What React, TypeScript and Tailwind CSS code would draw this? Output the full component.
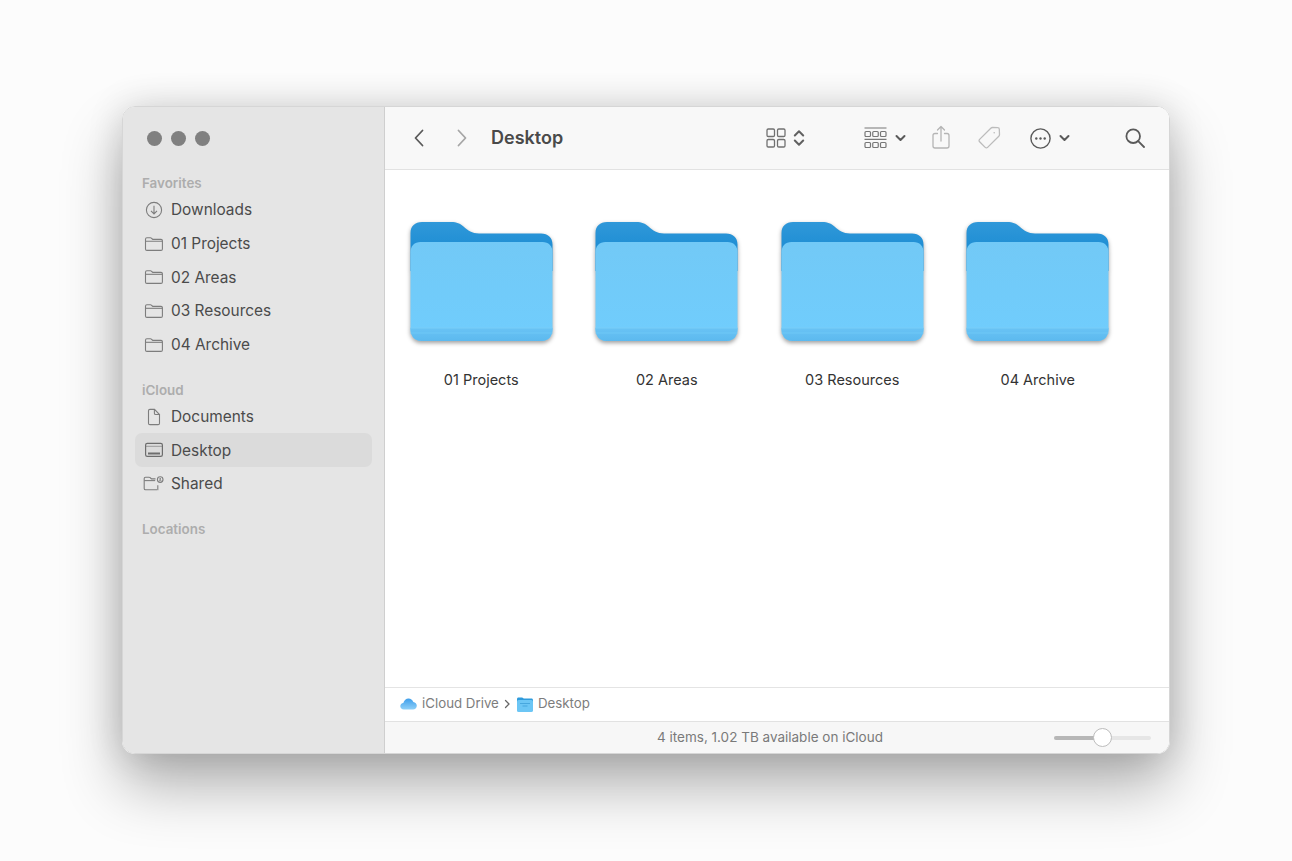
import React from "react";

const folderItems = ["01 Projects", "02 Areas", "03 Resources", "04 Archive"];

function SmallFolder() {
  return (
    <svg width="20" height="20" viewBox="0 0 20 20" fill="none" stroke="#7d7d7d" strokeWidth="1.1">
      <path d="M1.5 15V5.2c0-.8.5-1.4 1.4-1.4h3.6c.5 0 .8.2 1.1.5l.7.7c.3.3.6.4 1.1.4h7.6c.8 0 1.4.6 1.4 1.4V15c0 .9-.6 1.4-1.4 1.4H2.9c-.9 0-1.4-.5-1.4-1.4z" />
      <path d="M1.5 7.3h17" />
    </svg>
  );
}

function DownloadIcon() {
  return (
    <svg width="20" height="20" viewBox="0 0 20 20" fill="none" stroke="#7d7d7d" strokeWidth="1.1">
      <circle cx="10" cy="10" r="7.6" />
      <path d="M10 5.8v8M7 10.9l3 3 3-3" />
    </svg>
  );
}

function DocIcon() {
  return (
    <svg width="20" height="20" viewBox="0 0 20 20" fill="none" stroke="#7d7d7d" strokeWidth="1.1">
      <path d="M4.5 3.8c0-.8.5-1.4 1.4-1.4h4.6l5 5.1v8.7c0 .9-.5 1.4-1.4 1.4H5.9c-.9 0-1.4-.5-1.4-1.4z" />
      <path d="M10.4 2.5v3.7c0 .8.5 1.3 1.3 1.3h3.7" />
    </svg>
  );
}

function DesktopIcon() {
  return (
    <svg width="20" height="20" viewBox="0 0 20 20" fill="none" stroke="#6d6d6d" strokeWidth="1.2">
      <rect x="1.6" y="3.4" width="16.8" height="13" rx="1.7" />
      <path d="M1.6 6.3h16.8" strokeWidth="0.6" />
      <path d="M4 13.5h12" strokeWidth="2" />
    </svg>
  );
}

function SharedIcon() {
  return (
    <svg width="22" height="20" viewBox="0 0 22 20" fill="none" stroke="#7d7d7d" strokeWidth="1.1">
      <path d="M14 15.8H2.5c-.8 0-1.3-.5-1.3-1.3V4.6c0-.8.5-1.3 1.3-1.3h3.6c.5 0 .8.1 1.1.4l.8.8c.3.3.6.4 1.1.4h3.4" />
      <path d="M1.2 6.6h11" />
      <path d="M14.4 15.8h.4v-4.6" />
      <circle cx="17.2" cy="5.6" r="2.8" />
      <circle cx="17.2" cy="4.9" r="0.9" fill="#7d7d7d" stroke="none" />
      <path d="M15.6 7.4c.5-1.1 2.7-1.1 3.2 0" strokeWidth="0.9" />
    </svg>
  );
}

function SideRow({ icon, label, active }: { icon: React.ReactNode; label: string; active?: boolean }) {
  return (
    <div className={`flex h-[33.6px] items-center rounded-[7px] ${active ? "bg-[#dbdbdb]" : ""}`}>
      <div className="flex w-[36px] shrink-0 justify-center pl-[2px]">{icon}</div>
      <span className="text-[15.4px] leading-none text-[#4b4b4b]">{label}</span>
    </div>
  );
}

function SideHeading({ children, className }: { children: React.ReactNode; className: string }) {
  return <div className={`pl-[7px] text-[13.4px] font-semibold leading-[16px] text-[#adadad] ${className}`}>{children}</div>;
}

function Folder() {
  return (
    <svg width="143" height="124" viewBox="0 0 143 124" className="block">
      <defs>
        <linearGradient id="back" x1="0" y1="0" x2="0" y2="1">
          <stop offset="0" stopColor="#3098d9" />
          <stop offset="1" stopColor="#0f85cf" />
        </linearGradient>
        <linearGradient id="front" x1="0" y1="0" x2="0" y2="1">
          <stop offset="0" stopColor="#72c9f6" />
          <stop offset="1" stopColor="#70cdfd" />
        </linearGradient>
        <linearGradient id="strip" x1="0" y1="0" x2="0" y2="1">
          <stop offset="0" stopColor="#69c3f5" />
          <stop offset="1" stopColor="#5cb9ee" />
        </linearGradient>
      </defs>
      <path
        d="M0.5 50V12C0.5 5 5 1 12 1h29c6 0 9 1.500 12.500 4.500C58 9.500 62 12.500 69 12.500H131c7 0 11.500 4 11.500 11V50z"
        fill="url(#back)"
      />
      <path
        d="M0.5 31c0-6 4-10 10-10h122c6 0 10 4 10 10v77c0 7-4 12-11 12H11.500c-7 0-11-5-11-12z"
        fill="url(#front)"
      />
      <path d="M0.5 107h142v1c0 7-4 12-11 12H11.500c-7 0-11-5-11-12z" fill="url(#strip)" />
      <path d="M0.500 107h142" stroke="#78cdf8" strokeWidth="1" />
      <path d="M0.500 112h142" stroke="#6fc8f6" strokeWidth="1" />
    </svg>
  );
}

function IconGrid() {
  return (
    <svg width="20" height="20" viewBox="0 0 20 20" fill="none" stroke="#707070" strokeWidth="1.3">
      <rect x="1" y="1" width="7.500" height="7.500" rx="1.300" />
      <rect x="11.500" y="1" width="7.500" height="7.500" rx="1.300" />
      <rect x="1" y="11.500" width="7.500" height="7.500" rx="1.300" />
      <rect x="11.500" y="11.500" width="7.500" height="7.500" rx="1.300" />
    </svg>
  );
}

function UpDown() {
  return (
    <svg width="12" height="20" viewBox="0 0 12 20" fill="none" stroke="#626262" strokeWidth="2" strokeLinecap="round" strokeLinejoin="round">
      <path d="M1.800 7.500 6 3.200l4.200 4.300M1.800 12.500 6 16.800l4.200-4.300" />
    </svg>
  );
}

function Chevron() {
  return (
    <svg width="11" height="8" viewBox="0 0 11 8" fill="none" stroke="#5a5a5a" strokeWidth="2" strokeLinecap="round" strokeLinejoin="round">
      <path d="M1.500 2 5.500 6l4-4" />
    </svg>
  );
}

function GroupIcon() {
  return (
    <svg width="23" height="22" viewBox="0 0 23 22" fill="none" stroke="#777" strokeWidth="1.200">
      <path d="M0.500 1h22M0.500 12.400h22" />
      <rect x="1" y="4.500" width="5.500" height="5" rx="1" />
      <rect x="8.750" y="4.500" width="5.500" height="5" rx="1" />
      <rect x="16.500" y="4.500" width="5.500" height="5" rx="1" />
      <rect x="1" y="15.500" width="5.500" height="5" rx="1" />
      <rect x="8.750" y="15.500" width="5.500" height="5" rx="1" />
      <rect x="16.500" y="15.500" width="5.500" height="5" rx="1" />
    </svg>
  );
}

function ShareIcon() {
  return (
    <svg width="18" height="24" viewBox="0 0 18 24" fill="none" stroke="#b4b4b4" strokeWidth="1.300" strokeLinecap="round" strokeLinejoin="round">
      <path d="M5.500 8.500H3c-1.300 0-2 .7-2 2V21c0 1.300.7 2 2 2h12c1.300 0 2-.7 2-2V10.500c0-1.300-.7-2-2-2h-2.500" />
      <path d="M9 16V1.500M5.500 5 9 1.500 12.500 5" />
    </svg>
  );
}

function TagIcon() {
  return (
    <svg width="24" height="24" viewBox="0 0 24 24" fill="none" stroke="#bcbcbc" strokeWidth="1.300" strokeLinejoin="round">
      <path d="M13.800 2.200c.5-.5 1-.7 1.700-.7l5.300.2c.9 0 1.500.6 1.500 1.500l.2 5.300c0 .7-.2 1.200-.7 1.700L10.600 21.400c-.7.7-1.700.7-2.400 0l-5.600-5.600c-.7-.7-.7-1.700 0-2.400z" />
      <circle cx="17.200" cy="6.800" r="0.800" fill="#bcbcbc" stroke="none" />
    </svg>
  );
}

function MoreIcon() {
  return (
    <svg width="21" height="21" viewBox="0 0 21 21" fill="none" stroke="#5a5a5a" strokeWidth="1.400">
      <circle cx="10.500" cy="10.500" r="9.600" />
      <circle cx="6.300" cy="10.500" r="1.200" fill="#5a5a5a" stroke="none" />
      <circle cx="10.500" cy="10.500" r="1.200" fill="#5a5a5a" stroke="none" />
      <circle cx="14.700" cy="10.500" r="1.200" fill="#5a5a5a" stroke="none" />
    </svg>
  );
}

function SearchIcon() {
  return (
    <svg width="20" height="20" viewBox="0 0 20 20" fill="none" stroke="#5a5a5a" strokeWidth="1.800" strokeLinecap="round">
      <circle cx="8.200" cy="8.200" r="6.800" />
      <path d="M13.200 13.200 19 19" />
    </svg>
  );
}

function Back({ color }: { color: string }) {
  return (
    <svg width="12" height="18" viewBox="0 0 12 18" fill="none" stroke={color} strokeWidth="1.800" strokeLinecap="round" strokeLinejoin="round">
      <path d="M9.500 1.500 2.500 9l7 7.500" />
    </svg>
  );
}

function Forward({ color }: { color: string }) {
  return (
    <svg width="12" height="18" viewBox="0 0 12 18" fill="none" stroke={color} strokeWidth="1.800" strokeLinecap="round" strokeLinejoin="round">
      <path d="M2.500 1.500 9.500 9l-7 7.500" />
    </svg>
  );
}

function CloudIcon() {
  return (
    <svg width="17" height="12" viewBox="0 0 17 12">
      <defs>
        <linearGradient id="cloud" x1="0" y1="0" x2="0" y2="1">
          <stop offset="0" stopColor="#3f9feb" />
          <stop offset="1" stopColor="#8fd0f8" />
        </linearGradient>
      </defs>
      <path d="M3.800 11.500C1.800 11.500.3 10.100.3 8.300c0-1.700 1.300-3 3-3.200C4 2.500 6.100.6 8.500.6c2.200 0 4 1.300 4.800 3.400 2 .2 3.500 1.900 3.500 3.800 0 2.100-1.700 3.700-3.800 3.700z" fill="url(#cloud)" />
    </svg>
  );
}

function TinyFolder() {
  return (
    <svg width="16" height="15" viewBox="0 0 16 15">
      <path d="M0 2c0-1 .6-1.600 1.600-1.600h3.600l1.600 1.200h7.600c1 0 1.600.6 1.600 1.600v3H0z" fill="#2f9bdc" />
      <rect x="0" y="3" width="16" height="12" rx="1.600" fill="#6cc6f5" />
      <path d="M3 6.500h10M5.500 9h5" stroke="#3d9fd8" strokeWidth="0.800" />
    </svg>
  );
}

export default function App() {
  return (
    <div
      className="flex h-[861px] w-full justify-center overflow-hidden bg-[#fcfcfc] pt-[106px]"
      style={{ fontFamily: "Inter, 'Liberation Sans', sans-serif" }}
    >
      <div className="flex h-[648px] w-[1048px] overflow-hidden rounded-[13px] border border-[#d6d6d6] shadow-[0_32px_60px_rgba(0,0,0,0.3),0_0_36px_rgba(0,0,0,0.14)]">
        <aside className="flex w-[262px] shrink-0 flex-col border-r border-[#cfcfcf] bg-[#e5e5e5] pl-[12px] pr-[12px]">
          <div className="flex h-[62px] shrink-0 items-center gap-[9px] pl-[12px]">
            <span className="h-[15px] w-[15px] rounded-full bg-[#808080]" />
            <span className="h-[15px] w-[15px] rounded-full bg-[#808080]" />
            <span className="h-[15px] w-[15px] rounded-full bg-[#808080]" />
          </div>
          <SideHeading className="mt-[6px]">Favorites</SideHeading>
          <div className="mt-[2.4px]">
            <SideRow icon={<DownloadIcon />} label="Downloads" />
            {folderItems.map((name) => (
              <SideRow key={name} icon={<SmallFolder />} label={name} />
            ))}
          </div>
          <SideHeading className="mt-[21.1px]">iCloud</SideHeading>
          <div className="mt-[1.4px]">
            <SideRow icon={<DocIcon />} label="Documents" />
            <SideRow icon={<DesktopIcon />} label="Desktop" active />
            <SideRow icon={<SharedIcon />} label="Shared" />
          </div>
          <SideHeading className="mt-[20.6px]">Locations</SideHeading>
        </aside>

        <main className="flex min-w-0 flex-1 flex-col bg-white">
          <header className="flex h-[63px] shrink-0 items-center border-b border-[#e2e2e2] bg-[#f8f8f8] pl-[28px]">
            <Back color="#5a5a5a" />
            <span className="ml-[31px]"><Forward color="#a6a6a6" /></span>
            <h1 className="ml-[23px] w-[275px] text-[18px] font-semibold leading-none text-[#4a4a4a]">Desktop</h1>
            <IconGrid />
            <span className="ml-[7px]"><UpDown /></span>
            <span className="ml-[59px]"><GroupIcon /></span>
            <span className="ml-[8px]"><Chevron /></span>
            <span className="ml-[26px] -mt-[3px]"><ShareIcon /></span>
            <span className="ml-[27px]"><TagIcon /></span>
            <span className="ml-[29px]"><MoreIcon /></span>
            <span className="ml-[8px]"><Chevron /></span>
            <span className="ml-[55px]"><SearchIcon /></span>
          </header>

          <section className="flex flex-1 items-start pl-[3.500px] pt-[51px]">
            {folderItems.map((name) => (
              <div key={name} className="flex w-[185.500px] flex-col items-center">
                <div className="drop-shadow-[0_2px_2px_rgba(0,0,0,0.38)]"><Folder /></div>
                <span className="mt-[26px] text-[14.500px] leading-[18px] text-[#333333]">{name}</span>
              </div>
            ))}
          </section>

          <div className="flex h-[34px] shrink-0 items-center gap-[5px] border-t border-[#e4e4e4] pb-[1px] pl-[15px] text-[13.300px] text-[#7d7d7d]">
            <CloudIcon />
            <span>iCloud Drive</span>
            <svg width="7" height="10" viewBox="0 0 7 10" fill="none" stroke="#666" strokeWidth="1.300" strokeLinecap="round" strokeLinejoin="round">
              <path d="M1.500 1.500 5 5 1.500 8.500" />
            </svg>
            <span className="ml-[1px]"><TinyFolder /></span>
            <span>Desktop</span>
          </div>

          <footer className="flex h-[32px] shrink-0 items-center border-t border-[#e2e2e2] bg-[#f7f7f7] pl-[272px] pr-[18px] text-[13.500px] text-[#7a7a7a]">
            <span>4 items, 1.02 TB available on iCloud</span>
            <div className="relative ml-auto h-[4px] w-[97px] rounded-full bg-[#e6e6e6]">
              <div className="h-full w-[42px] rounded-full bg-[#b7b7b7]" />
              <div className="absolute left-[39px] top-[-8px] h-[19px] w-[19px] rounded-full border border-[#bcbcbc] bg-white" />
            </div>
          </footer>
        </main>
      </div>
    </div>
  );
}
